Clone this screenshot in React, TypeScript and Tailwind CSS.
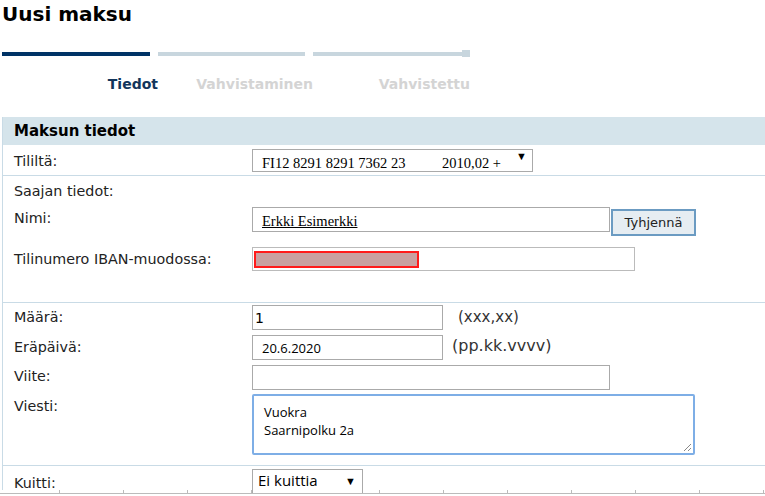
import React from "react";

const labelFont = { fontFamily: '"DejaVu Sans", Verdana, sans-serif' };
const serifFont = { fontFamily: '"Liberation Serif", "Times New Roman", serif' };
const uiFont = { fontFamily: '"Open Sans", "Noto Sans", sans-serif' };

function Label({ children, pt = "pt-[3px]" }: { children: React.ReactNode; pt?: string }) {
  return <div className={`w-[249px] shrink-0 pl-[11px] text-[14.3px] leading-[16px] text-[#222] ${pt}`}>{children}</div>;
}

function Arrow() {
  return <span className="block text-[11px] leading-none text-black">▼</span>;
}

export default function App() {
  const ticks = Array.from({ length: 12 });

  return (
    <div className="h-[496px] w-[765px] overflow-hidden bg-white text-black" style={labelFont}>
      <h1 className="pl-[2px] pt-[3px] text-[20px] font-bold leading-[23px]">Uusi maksu</h1>

      <div className="mt-[24px] flex h-[7px] items-center pl-[2px]">
        <div className="h-[4px] w-[148px] bg-[#003366]" />
        <div className="ml-[8px] h-[4px] w-[147px] bg-[#c8d6de]" />
        <div className="ml-[8px] h-[4px] w-[149px] bg-[#c8d6de]" />
        <div className="h-[7px] w-[8px] bg-[#c8d6de]" />
      </div>

      <div className="mt-[18px] flex h-[18px] text-[14px] font-bold leading-[18px]">
        <div className="w-[158px] text-right text-[#12355b]">Tiedot</div>
        <div className="w-[155px] text-right text-[#d4d4d4]">Vahvistaminen</div>
        <div className="w-[157px] text-right text-[#d4d4d4]">Vahvistettu</div>
      </div>

      <section className="ml-[2px] mt-[24px] border-l border-[#c9dbe6]">
        <div className="h-[28px] bg-[#d5e4eb] pl-[11px] text-[15px] font-bold leading-[28px]">Maksun tiedot</div>

        {/* Tililtä */}
        <div className="flex h-[31px] border-b border-[#c9dbe6] pt-[4px]">
          <Label pt="pt-[4px]">Tililtä:</Label>
          <div
            className="relative flex h-[23px] w-[281px] overflow-hidden border border-[#aaa] bg-white pl-[9px] pt-[4px] text-[14.5px] leading-[18px]"
            style={serifFont}
          >
            <span className="w-[180px]">FI12 8291 8291 7362 23</span>
            <span>2010,02 +</span>
            <span className="absolute right-[5px] top-[1px]">
              <Arrow />
            </span>
          </div>
        </div>

        {/* Saajan tiedot */}
        <div className="pt-[3px]">
          <div className="flex h-[28px]">
            <Label pt="pt-[4px]">Saajan tiedot:</Label>
          </div>

          <div className="flex h-[40px]">
            <Label pt="pt-[3px]">Nimi:</Label>
            <div className="h-[25px] w-[358px] border border-[#aaa] bg-white pl-[9px] pt-[5px] text-[14.5px] leading-[16px]" style={serifFont}>
              <span className="underline">Erkki Esimerkki</span>
            </div>
            <button className="ml-[1px] mt-[2px] h-[27px] w-[85px] border-2 border-[#6b9bc2] bg-[#e6edf2] text-[13px] leading-[16px] text-[#222]">
              Tyhjennä
            </button>
          </div>

          <div className="flex h-[56px] border-b border-[#c9dbe6]">
            <Label pt="pt-[4px]">Tilinumero IBAN-muodossa:</Label>
            <div className="h-[24px] w-[383px] border border-[#bbb] bg-white pl-[1px] pt-[3px]">
              <div className="h-[17px] w-[165px] border-2 border-[#ff1a1a] bg-[#c9a0a0]" />
            </div>
          </div>
        </div>

        {/* Määrä etc */}
        <div className="border-b border-[#c9dbe6] pt-[2px]">
          <div className="flex h-[30px]">
            <Label pt="pt-[4px]">Määrä:</Label>
            <div className="h-[25px] w-[191px] border border-[#aaa] bg-white pl-[2px] pt-[4px] text-[14px] leading-[16px]">1</div>
            <div className="pl-[15px] pt-[3px] text-[15px] leading-[18px] text-[#333]">(xxx,xx)</div>
          </div>

          <div className="flex h-[30px]">
            <Label pt="pt-[4px]">Eräpäivä:</Label>
            <div className="h-[25px] w-[191px] border border-[#aaa] bg-white pl-[9px] pt-[4px] text-[13px] leading-[16px]" style={uiFont}>
              20.6.2020
            </div>
            <div className="pl-[9px] pt-[1px] text-[16px] leading-[20px] text-[#333]">(pp.kk.vvvv)</div>
          </div>

          <div className="flex h-[29px]">
            <Label pt="pt-[3px]">Viite:</Label>
            <div className="h-[25px] w-[358px] border border-[#aaa] bg-white" />
          </div>

          <div className="flex h-[71px]">
            <Label pt="pt-[4px]">Viesti:</Label>
            <div
              className="relative h-[61px] w-[443px] rounded-[2px] border-2 border-[#7eaee6] bg-white pl-[10px] pt-[7px] text-[13px] leading-[18px]"
              style={uiFont}
            >
              <div>Vuokra</div>
              <div>Saarnipolku 2a</div>
              <svg className="absolute bottom-[1px] right-[1px]" width="9" height="9" viewBox="0 0 9 9">
                <path d="M8 1L1 8M8 5L5 8" stroke="#888" strokeWidth="1" />
              </svg>
            </div>
          </div>
        </div>

        {/* Kuitti */}
        <div className="flex h-[24px] pt-[3px]">
          <Label pt="pt-[6px]">Kuitti:</Label>
          <div className="relative h-[24px] w-[111px] border border-b-0 border-[#aaa] bg-white pl-[5px] text-[15px] leading-[20px]" style={uiFont}>
            <span>Ei kuittia</span>
            <span className="absolute right-[6px] top-[5px]">
              <Arrow />
            </span>
          </div>
        </div>
      </section>

      <div className="flex h-[4px] border-b border-[#bbb] pl-[59px]">
        {ticks.map((_, i) => (
          <div key={i} className="h-[3px] w-[64px] shrink-0 self-end border-l border-[#bbb]" />
        ))}
      </div>
    </div>
  );
}
